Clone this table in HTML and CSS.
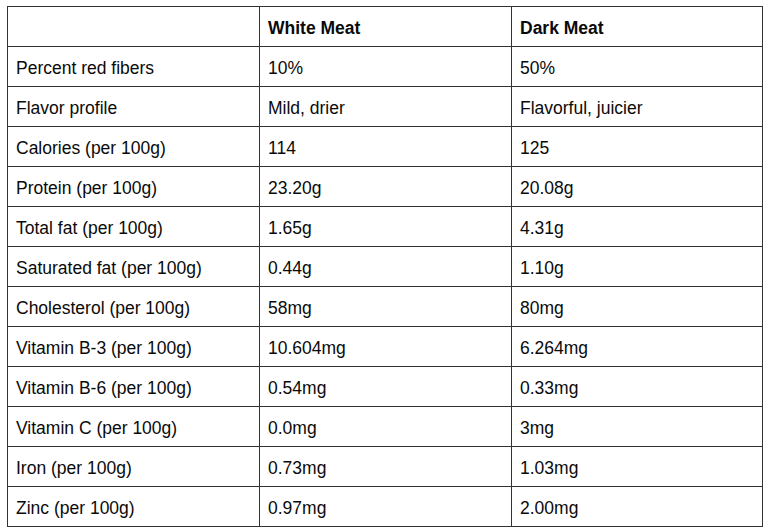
FILE: index.html
```html
<!DOCTYPE html>
<html>
<head>
<meta charset="utf-8">
<link rel="stylesheet" href="styles.css">
</head>
<body>
<div class="page">
<table class="grid">
  <colgroup><col class="c1"><col class="c2"><col class="c3"></colgroup>
  <tr class="head"><td></td><td>White Meat</td><td>Dark Meat</td></tr>
  <tr><td>Percent red fibers</td><td>10%</td><td>50%</td></tr>
  <tr><td>Flavor profile</td><td>Mild, drier</td><td>Flavorful, juicier</td></tr>
  <tr><td>Calories (per 100g)</td><td>114</td><td>125</td></tr>
  <tr><td>Protein (per 100g)</td><td>23.20g</td><td>20.08g</td></tr>
  <tr><td>Total fat (per 100g)</td><td>1.65g</td><td>4.31g</td></tr>
  <tr><td>Saturated fat (per 100g)</td><td>0.44g</td><td>1.10g</td></tr>
  <tr><td>Cholesterol (per 100g)</td><td>58mg</td><td>80mg</td></tr>
  <tr><td>Vitamin B-3 (per 100g)</td><td>10.604mg</td><td>6.264mg</td></tr>
  <tr><td>Vitamin B-6 (per 100g)</td><td>0.54mg</td><td>0.33mg</td></tr>
  <tr><td>Vitamin C (per 100g)</td><td>0.0mg</td><td>3mg</td></tr>
  <tr><td>Iron (per 100g)</td><td>0.73mg</td><td>1.03mg</td></tr>
  <tr><td>Zinc (per 100g)</td><td>0.97mg</td><td>2.00mg</td></tr>
</table>
</div>
</body>
</html>
```
FILE: styles.css
```css
html, body { margin: 0; padding: 0; background: #fff; }
.page { padding: 6px 7px; }
.grid {
  border-collapse: collapse;
  width: 755px;
  table-layout: fixed;
  font-family: "Liberation Sans", Arial, sans-serif;
  font-size: 17.5px;
  color: #0a0a0a;
}
.c1 { width: 252px; }
.c2 { width: 252px; }
.c3 { width: 251px; }
.grid td {
  border: 1px solid #333;
  height: 39px;
  padding: 4px 8px 0 8px;
  box-sizing: border-box;
  vertical-align: middle;
  white-space: nowrap;
}
.grid tr { height: 40px; }
.head td { font-weight: bold; }
```
